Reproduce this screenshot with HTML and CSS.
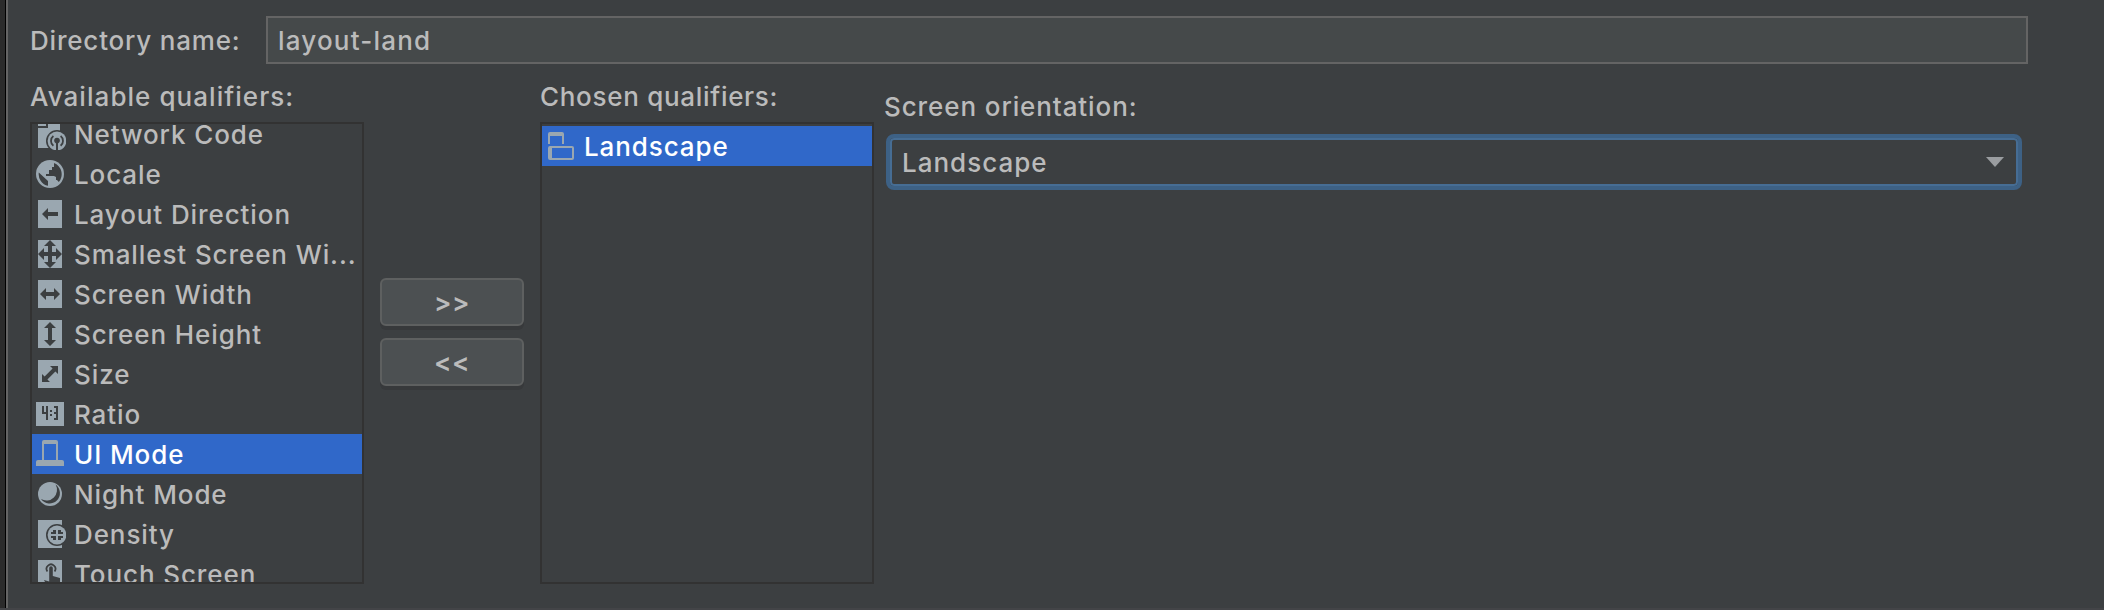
FILE: index.html
```html
<!DOCTYPE html>
<html lang="en">
<head>
<meta charset="utf-8">
<title>New Resource Directory</title>
<link rel="stylesheet" href="styles.css">
</head>
<body>
<div class="window">
  <div class="gutter"></div>
  <main class="dialog">
    <div class="name-row">
      <label class="name-label" for="dir-name">Directory name:</label>
      <input class="name-field" id="dir-name" type="text" value="layout-land" spellcheck="false">
    </div>
    <div class="panes">
      <section class="pane">
        <h2 class="pane-title pane-title-wide">Available qualifiers:</h2>
        <ul class="list list-scrolled">
          <li class="item">
            <svg class="icon" viewBox="0 0 16 16"><path d="M2 3h4v1H2zM7 1h6v6H2V5h5z"/><path d="M2 6h11v9H2z"/><circle class="cut" cx="11.5" cy="11.5" r="5.5"/><circle cx="11.5" cy="11.5" r="4.7"/><circle class="cut" cx="11.5" cy="11.3" r="1.4"/><path class="cut" d="M11 11.500h1V16.200h-1z"/><path class="line" d="M9.700 13.900a3.100 3.100 0 0 1 0-4.900M13.300 13.900a3.100 3.100 0 0 0 0-4.900" stroke-width=".9"/></svg>
            <span class="text">Network Code</span></li>
          <li class="item">
            <svg class="icon" viewBox="0 0 16 16"><circle cx="8" cy="8" r="7"/><path class="cut" d="M2.4 7.2 7 11.5v2.4A6 6 0 0 1 2.4 7.200zM10 2.500A6 6 0 0 1 12.400 12L11.500 11H11V9.500L10 9H6V8h1.500V6H9V4.500h1z"/></svg>
            <span class="text">Locale</span></li>
          <li class="item">
            <svg class="icon" viewBox="0 0 16 16"><path d="M2 1h12v14H2z"/><path class="cut" d="M4 8l3-3v2h5v2H7v2z"/></svg>
            <span class="text">Layout Direction</span></li>
          <li class="item">
            <svg class="icon" viewBox="0 0 16 16"><path d="M2 1h12v14H2z"/><path class="cut" d="M8 1l3 3H9v3h2V5l3 3-3 3V9H9v3h2l-3 3-3-3h2V9H5v2L2 8l3-3v2h2V4H5z"/></svg>
            <span class="text">Smallest Screen Wi...</span></li>
          <li class="item">
            <svg class="icon" viewBox="0 0 16 16"><path d="M2 1h12v14H2z"/><path class="cut" d="M3 8l3-3v2h4V5l3 3-3 3V9H6v2z"/></svg>
            <span class="text">Screen Width</span></li>
          <li class="item">
            <svg class="icon" viewBox="0 0 16 16"><path d="M2 1h12v14H2z"/><path class="cut" d="M8 2l3 3H9v6h2l-3 3-3-3h2V5H5z"/></svg>
            <span class="text">Screen Height</span></li>
          <li class="item">
            <svg class="icon" viewBox="0 0 16 16"><path d="M2 1h12v14H2z"/><path class="cut" d="M8 4h4v4l-1.300-1.300-4 4L8 12H4V8l1.300 1.300 4-4z"/></svg>
            <span class="text">Size</span></li>
          <li class="item">
            <svg class="icon" viewBox="0 0 16 16"><path d="M1 2h14v12H1z"/><path class="cut" d="M4 4h1v3h1V4h1v7H6V8H4zM8 6h1v1H8zM8 8h1v1H8zM10 4h2v7h-2v-1h1V8h-1V7h1V5h-1z"/></svg>
            <span class="text">Ratio</span></li>
          <li class="item selected">
            <svg class="icon" viewBox="0 0 16 16"><path fill-rule="evenodd" d="M4 2q0-1 1-1h6q1 0 1 1v9H4zM5 3v8h6V3z"/><path d="M2 11h12q1 0 1 1v2H1v-2q0-1 1-1z"/></svg>
            <span class="text">UI Mode</span></li>
          <li class="item">
            <svg class="icon" viewBox="0 0 16 16"><circle cx="8" cy="8" r="6"/><path class="cut" d="M10.800 3.300A5.300 5.300 0 0 1 3.500 10.500 5.200 5.200 0 1 0 10.800 3.300z"/></svg>
            <span class="text">Night Mode</span></li>
          <li class="item">
            <svg class="icon" viewBox="0 0 16 16"><path d="M2 1h12v14H2z"/><circle class="cut" cx="11.500" cy="8.500" r="5.500"/><circle cx="11.500" cy="8.500" r="4.700"/><path class="cut" d="M9.500 6H11v2H8.500V7h1zM12 6h1.500v1h1v1H12zM8.500 9H11v2H9.500v-1h-1zM12 9h2.500v1h-1v1H12z"/></svg>
            <span class="text">Density</span></li>
          <li class="item">
            <svg class="icon" viewBox="0 0 16 16"><path d="M2 1h12v14H2z"/><path class="line" d="M6.700 6.700a2.200 2.200 0 1 1 3.600 0" stroke-width=".9"/><path class="cut" d="M7.600 5q0-.9.900-.9t.9.900v4l3.600 1V15H7l-2-4 2.600.8z"/></svg>
            <span class="text">Touch Screen</span></li>
        </ul>
      </section>
      <div class="movers">
        <button class="mover" type="button">&gt;&gt;</button>
        <button class="mover" type="button">&lt;&lt;</button>
      </div>
      <section class="pane">
        <h2 class="pane-title">Chosen qualifiers:</h2>
        <ul class="list list-chosen">
          <li class="item selected">
            <svg class="icon" viewBox="0 0 16 16"><path d="M2 7V2q0-1 1-1h6q1 0 1 1v5H9V3H3v4z"/><path fill-rule="evenodd" d="M3 8h11q1 0 1 1v5q0 1-1 1H3q-1 0-1-1V9q0-1 1-1zM4 9v5h10V9z"/></svg>
            <span class="text">Landscape</span></li>
        </ul>
      </section>
      <section class="details">
        <h2 class="details-title">Screen orientation:</h2>
        <div class="combo" role="combobox" tabindex="0">
          <span class="combo-value">Landscape</span>
          <svg class="combo-arrow" viewBox="0 0 18 10"><path d="M0 0h18L9 10z"/></svg>
        </div>
      </section>
    </div>
  </main>
</div>
</body>
</html>
```
FILE: styles.css
```css
* { box-sizing: border-box; }

body {
  margin: 0;
  background: #3c3f41;
  color: #bbbbbb;
  font: 450 26px/40px Inter, "Liberation Sans", sans-serif;
  letter-spacing: 0.9px;
}

.window { display: flex; height: 610px; overflow: hidden; border-bottom: 2px solid #434447; }

.gutter {
  flex: none;
  width: 8px;
  background: #2b2b2b;
  border-right: 2px solid #646464;
  box-shadow: inset -1px 0 #000;
}

.dialog { flex: 1; min-width: 0; padding: 16px 76px 0 22px; }

.name-row { display: flex; height: 48px; align-items: center; }
.name-label { flex: none; width: 236px; padding-top: 2px; letter-spacing: 0.8px; }
.name-field {
  flex: 1;
  height: 48px;
  padding: 0 10px;
  border: 2px solid #646464;
  border-radius: 0;
  outline: 0;
  background: #45494a;
  color: inherit;
  font: inherit;
  letter-spacing: 1.2px;
}

.panes { display: flex; align-items: flex-start; }

.pane { flex: none; width: 334px; padding-top: 13px; }
.pane-title, .details-title { margin: 0; font: inherit; white-space: nowrap; }
.pane-title { height: 45px; letter-spacing: 0.7px; }
.pane-title-wide { letter-spacing: 1.05px; }

.list {
  height: 462px;
  margin: 0;
  padding: 0;
  border: 2px solid #323232;
  overflow: hidden;
  list-style: none;
}
.list-chosen { padding-top: 2px; }
.list-scrolled .item:first-child { margin-top: -10px; }

.item { display: flex; height: 40px; align-items: center; padding-left: 2px; white-space: nowrap; }
.item.selected { background: #3068c9; color: #ffffff; }
.item .text { padding-top: 2px; }

.icon { flex: none; width: 32px; height: 32px; margin-right: 8px; fill: #9aa7b0; }
.icon .cut { fill: #3c3f41; }
.icon .line { fill: none; stroke: #3c3f41; }

.movers { display: flex; flex: none; flex-direction: column; gap: 12px; padding: 214px 16px 0; }
.mover {
  width: 144px;
  height: 48px;
  padding: 2px 0 0;
  border: 2px solid #5e6060;
  border-radius: 6px;
  background: #4c5052;
  box-shadow: 0 4px 0 #37393b;
  color: inherit;
  font: inherit;
  font-weight: 600;
  letter-spacing: 0.6px;
}

.details { flex: 1; min-width: 0; padding: 23px 6px 0 12px; }
.details-title { height: 47px; margin-left: -2px; }
.combo {
  display: flex;
  height: 56px;
  align-items: center;
  justify-content: space-between;
  padding: 0 14px 0 12px;
  border: 4px solid #3d6185;
  border-radius: 8px;
  box-shadow: inset 0 0 0 2px #466d94;
}
.combo-value { padding-top: 2px; letter-spacing: 1px; }
.combo-arrow { width: 18px; height: 10px; fill: #9a9da0; }
```
